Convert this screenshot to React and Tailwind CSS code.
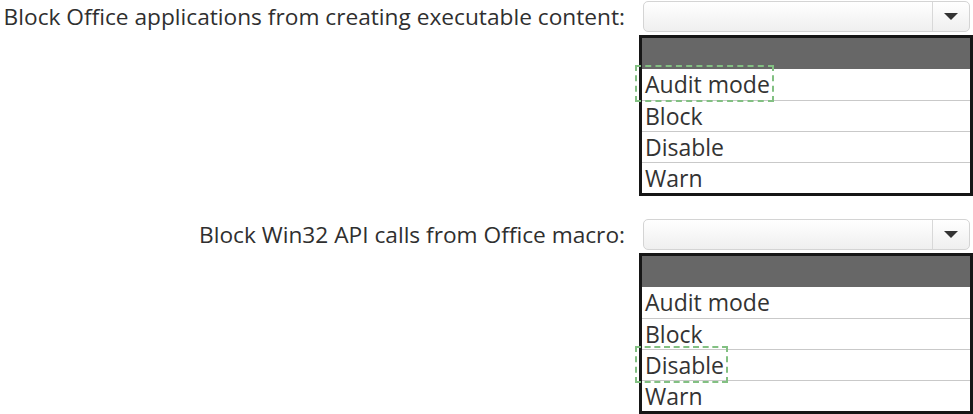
const options = ["Audit mode", "Block", "Disable", "Warn"];

function Caret() {
  return (
    <svg width="16" height="9" viewBox="0 0 16 9">
      <path d="M1 1 L15 1 L8 8 Z" fill="#333" />
    </svg>
  );
}

function DropList({ label, marked }) {
  return (
    <div className="flex">
      <div className="w-[628px] h-[32px] flex items-center justify-end whitespace-nowrap text-[22.7px] text-[#2f2f2f] pr-[3px]">
        {label}
      </div>
      <div className="w-[334px] ml-[11px]">
        <div className="ml-[4px] w-[327px] h-[31px] flex rounded-[5px] border border-[#d4d4d4] bg-gradient-to-b from-white to-[#efefef]">
          <div className="flex-1" />
          <div className="w-[37px] border-l border-[#d8d8d8] flex items-center justify-center">
            <Caret />
          </div>
        </div>
        <div className="mt-[3px] border-[3px] border-[#161616] bg-white">
          <div className="h-[31px] bg-[#676767]" />
          {options.map((opt, i) => (
            <div
              key={opt}
              className={
                "h-[31px] flex items-center pl-[3px] text-[23px] text-[#333] leading-none " +
                (i > 0 ? "border-t border-[#c9c9c9]" : "")
              }
            >
              <span className="relative">
                {opt}
                {marked === opt && (
                  <span className="absolute -left-[10px] -right-[4px] -top-[8px] -bottom-[6px] border-2 border-dashed border-[#82c082]" />
                )}
              </span>
            </div>
          ))}
        </div>
      </div>
    </div>
  );
}

export default function App() {
  return (
    <div
      className="w-[973px] h-[414px] bg-white overflow-hidden pt-[1px]"
      style={{ fontFamily: '"Open Sans", "Noto Sans", sans-serif' }}
    >
      <DropList
        label="Block Office applications from creating executable content:"
        marked="Audit mode"
      />
      <div className="mt-[23px]">
        <DropList label="Block Win32 API calls from Office macro:" marked="Disable" />
      </div>
    </div>
  );
}
